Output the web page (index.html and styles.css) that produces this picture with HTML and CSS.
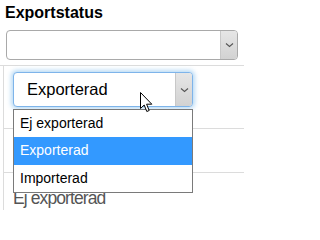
FILE: index.html
```html
<!DOCTYPE html>
<html>
<head>
<meta charset="utf-8">
<link rel="stylesheet" href="styles.css">
</head>
<body>
<div class="page">
  <div class="title">Exportstatus</div>
  <div class="sel sel-top">
    <div class="sel-value"></div>
    <div class="sel-btn"><svg width="9" height="6" viewBox="0 0 9 6"><path d="M1 1.5 L4.5 4.5 L8 1.5" fill="none" stroke="#555" stroke-width="1.1"/></svg></div>
  </div>
  <div class="table">
    <div class="row row1">
      <div class="sel sel-open">
        <div class="sel-value">Exporterad</div>
        <div class="sel-btn"><svg width="9" height="6" viewBox="0 0 9 6"><path d="M1 1.5 L4.5 4.5 L8 1.5" fill="none" stroke="#555" stroke-width="1.1"/></svg></div>
      </div>
    </div>
    <div class="row row2"></div>
    <div class="row row3">
      <div class="bg-text">Ej exporterad</div>
    </div>
  </div>
  <ul class="dropdown">
    <li>Ej exporterad</li>
    <li class="active">Exporterad</li>
    <li>Importerad</li>
  </ul>
  <svg class="cursor" width="13" height="21" viewBox="0 0 13 21">
    <path d="M0.5 0.5 L0.5 16.5 L4.2 13 L6.8 19.5 L9.2 18.5 L6.6 12.2 L11.8 12.2 Z" fill="#fff" stroke="#000" stroke-width="1" stroke-linejoin="miter"/>
  </svg>
</div>
</body>
</html>
```
FILE: styles.css
```css
html, body {
  margin: 0;
  padding: 0;
  background: #fff;
}
.page {
  position: relative;
  width: 244px;
  height: 210px;
  overflow: hidden;
  font-family: "Liberation Sans", Arial, sans-serif;
  color: #000;
}
.title {
  font-weight: bold;
  font-size: 16px;
  line-height: 18px;
  padding: 4px 0 0 5px;
  height: 26px;
  box-sizing: border-box;
}
.sel {
  display: flex;
  box-sizing: border-box;
  border: 1px solid #a9a9a9;
  border-radius: 4px;
  background: #fff;
  overflow: hidden;
}
.sel-top {
  margin: 4px 0 0 6px;
  width: 232px;
  height: 30px;
}
.sel-value {
  flex: 1;
  font-size: 16.5px;
  line-height: 33px;
  padding-left: 13px;
}
.sel-btn {
  width: 16px;
  border-left: 1px solid #c8c8c8;
  background: linear-gradient(#e6e6e6, #d2d2d2);
  display: flex;
  align-items: center;
  justify-content: center;
}
.table {
  margin-top: 5px;
  border-top: 1px solid #dcdcdc;
}
.row {
  margin-left: 3px;
  border-left: 1px solid #dcdcdc;
  border-bottom: 1px solid #dcdcdc;
  box-sizing: border-box;
}
.row1 {
  height: 63px;
  padding: 6px 0 0 9px;
}
.row2 {
  height: 44px;
}
.row3 {
  height: 60px;
  border-bottom: none;
  padding: 15px 0 0 9px;
}
.sel-open {
  width: 180px;
  height: 35px;
  border-color: #7eb4ea;
  box-shadow: 0 0 4px 2px rgba(102, 175, 233, 0.45);
}
.bg-text {
  font-size: 17.5px;
  letter-spacing: -0.9px;
  color: #555;
  line-height: 20px;
}
.dropdown {
  position: absolute;
  left: 13px;
  top: 109px;
  width: 180px;
  margin: 0;
  padding: 0;
  list-style: none;
  border: 1px solid #7a7a7a;
  box-sizing: border-box;
  background: #fff;
}
.dropdown li {
  height: 27.3px;
  line-height: 27px;
  font-size: 14px;
  padding-left: 6px;
}
.dropdown li.active {
  background: #3399ff;
  color: #fff;
}
.cursor {
  position: absolute;
  left: 140px;
  top: 92px;
}
```
